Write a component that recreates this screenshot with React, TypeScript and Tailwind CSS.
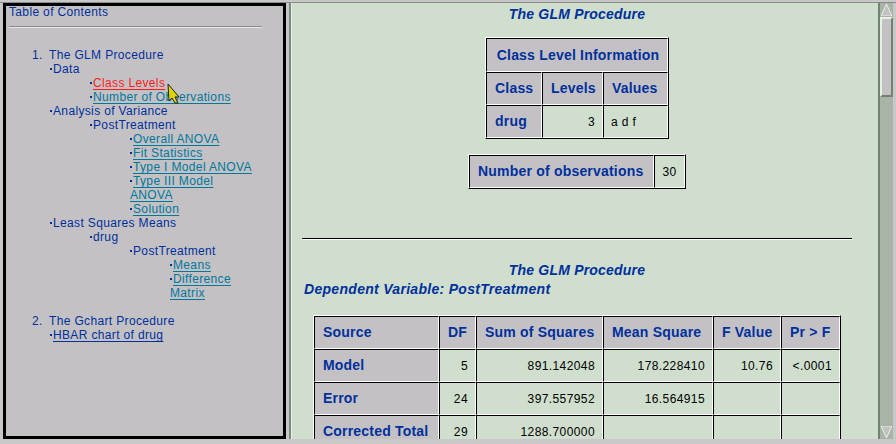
const font = "font-['Liberation_Sans',Arial,sans-serif]"

const Bullet = () => <span className="inline-block w-[2px] h-[2px] bg-[#00309c] align-[3px] mr-[1px]" />

const TocLink = ({ text, color = "text-[#00789c]" }: { text: string; color?: string }) => (
  <a className={`underline underline-offset-[2px] ${color}`}>{text}</a>
)

const TocRow = ({ pad, children }: { pad: string; children: React.ReactNode }) => (
  <div className={pad}>
    <Bullet />
    {children}
  </div>
)

const Head = ({
  children,
  className = "",
  colSpan,
}: {
  children: React.ReactNode
  className?: string
  colSpan?: number
}) => (
  <td
    colSpan={colSpan}
    className={`bg-[#c4c1c4] border-t border-l border-t-black border-l-black border-r border-b border-r-white border-b-white pl-[8px] pr-[6px] text-[14px] font-bold text-[#00309c] tracking-[0.2px] whitespace-nowrap ${className}`}
  >
    {children}
  </td>
)

const Cell = ({ children, className = "text-right" }: { children?: React.ReactNode; className?: string }) => (
  <td
    className={`border-t border-l border-t-black border-l-black border-r border-b border-r-white border-b-white px-[7px] text-[12px] text-black tracking-[0.4px] whitespace-nowrap ${className}`}
  >
    {children}
  </td>
)

const anova = [
  ["Model", "5", "891.142048", "178.228410", "10.76", "<.0001"],
  ["Error", "24", "397.557952", "16.564915", "", ""],
  ["Corrected Total", "29", "1288.700000", "", "", ""],
]

const tableClass =
  "border-separate border-spacing-0 border-t border-l border-t-white border-l-white border-r border-b border-r-black border-b-black"

const titleClass = "text-[14px] italic font-bold text-[#00309c]"

export default function App() {
  return (
    <div className={`${font} relative w-[896px] h-[444px] overflow-hidden bg-[#c8c8c8] flex flex-col`}>
      <div className="h-[3px] shrink-0 border-b border-[#8a8a8a]" />
      <div className="flex h-[436px] pl-[3px] pr-[3px]">
        {/* toc frame */}
        <div className="w-[283px] shrink-0 border-[3px] border-black bg-[#c4c1c4] text-[12px] leading-[14px] tracking-[0.35px] text-[#00309c] px-[3px]">
          <div className="leading-[12px]">Table of Contents</div>
          <div className="mt-[8px] h-[2px] w-[253px] bg-[#e8e8e8] border-t border-[#8a8a8a]" />
          <div className="mt-[20px] pl-[23px] w-[248px]">
            <div>
              <span className="inline-block w-[17px]">1.</span>The GLM Procedure
            </div>
            <TocRow pad="pl-[18px]">Data</TocRow>
            <TocRow pad="pl-[58px]">
              <TocLink text="Class Levels" color="text-[#ff1c1c]" />
            </TocRow>
            <TocRow pad="pl-[58px]">
              <TocLink text="Number of Observations" />
            </TocRow>
            <TocRow pad="pl-[18px]">Analysis of Variance</TocRow>
            <TocRow pad="pl-[58px]">PostTreatment</TocRow>
            <TocRow pad="pl-[98px]">
              <TocLink text="Overall ANOVA" />
            </TocRow>
            <TocRow pad="pl-[98px]">
              <TocLink text="Fit Statistics" />
            </TocRow>
            <TocRow pad="pl-[98px]">
              <TocLink text="Type I Model ANOVA" />
            </TocRow>
            <TocRow pad="pl-[98px]">
              <TocLink text="Type III Model ANOVA" />
            </TocRow>
            <TocRow pad="pl-[98px]">
              <TocLink text="Solution" />
            </TocRow>
            <TocRow pad="pl-[18px]">Least Squares Means</TocRow>
            <TocRow pad="pl-[58px]">drug</TocRow>
            <TocRow pad="pl-[98px]">PostTreatment</TocRow>
            <TocRow pad="pl-[138px]">
              <TocLink text="Means" />
            </TocRow>
            <TocRow pad="pl-[138px]">
              <TocLink text="Difference Matrix" />
            </TocRow>
            <div className="mt-[14px]">
              <span className="inline-block w-[17px]">2.</span>The Gchart Procedure
            </div>
            <TocRow pad="pl-[18px]">
              <TocLink text="HBAR chart of drug" color="text-[#00309c]" />
            </TocRow>
          </div>
        </div>

        {/* splitter */}
        <div className="w-[5px] shrink-0 border-r-2 border-[#7c8c7c]" />

        {/* output frame */}
        <div className="w-[587px] shrink-0 bg-[#cfdecd] overflow-hidden border-l border-[#e8f0e6]">
          <div className="w-[550px] ml-[10px] flex flex-col items-center">
            <div className={`${titleClass} pt-[2px] leading-[18px] tracking-[0.2px]`}>The GLM Procedure</div>
            <table className={`${tableClass} mt-[14px] h-[102px]`}>
              <tbody>
                <tr className="h-[34px]">
                  <Head colSpan={3} className="text-center">
                    Class Level Information
                  </Head>
                </tr>
                <tr className="h-[33px]">
                  <Head className="w-[56px]">Class</Head>
                  <Head className="w-[61px]">Levels</Head>
                  <Head className="w-[65px]">Values</Head>
                </tr>
                <tr className="h-[33px]">
                  <Head>drug</Head>
                  <Cell>3</Cell>
                  <Cell className="text-left">a d f</Cell>
                </tr>
              </tbody>
            </table>
            <table className={`${tableClass} mt-[15px] h-[35px]`}>
              <tbody>
                <tr>
                  <Head className="w-[185px]">Number of observations</Head>
                  <Cell className="text-center w-[31px]">30</Cell>
                </tr>
              </tbody>
            </table>
            <div className="mt-[49px] h-[2px] w-full border-t border-black bg-white" />
            <div className={`${titleClass} mt-[21px] leading-[18px] tracking-[0.2px]`}>The GLM Procedure</div>
            <div className={`${titleClass} self-start ml-[2px] leading-[20px] tracking-[0.3px]`}>
              Dependent Variable: PostTreatment
            </div>
            <table className={`${tableClass} mt-[16px] self-start ml-[11px]`}>
              <tbody>
                <tr className="h-[33px]">
                  <Head className="w-[125px]">Source</Head>
                  <Head className="w-[37px]">DF</Head>
                  <Head className="w-[127px]">Sum of Squares</Head>
                  <Head className="w-[110px]">Mean Square</Head>
                  <Head className="w-[68px]">F Value</Head>
                  <Head className="w-[59px]">Pr &gt; F</Head>
                </tr>
                {anova.map((row) => (
                  <tr key={row[0]} className="h-[33px]">
                    <Head>{row[0]}</Head>
                    {row.slice(1).map((value, i) => (
                      <Cell key={i}>{value}</Cell>
                    ))}
                  </tr>
                ))}
              </tbody>
            </table>
          </div>
        </div>

        {/* scrollbar */}
        <div className="w-[15px] shrink-0 flex flex-col bg-[#a8b5a6] border-l-2 border-[#6f8370]">
          <div className="h-[14px] shrink-0 flex items-center justify-center">
            <svg width="11" height="12" viewBox="0 0 11 12">
              <polygon points="5.5,0 11,12 0,12" fill="#c4c1c4" stroke="#e8f0e6" strokeWidth="1" />
            </svg>
          </div>
          <div className="h-[80px] shrink-0 bg-[#c4c1c4] border-t-2 border-l-2 border-t-[#e8f0e6] border-l-[#e8f0e6] border-r-2 border-b-2 border-r-[#6f8370] border-b-[#6f8370]" />
          <div className="flex-1" />
          <div className="h-[14px] shrink-0 flex items-center justify-center">
            <svg width="11" height="12" viewBox="0 0 11 12">
              <polygon points="0,0 11,0 5.5,12" fill="#c4c1c4" stroke="#e8f0e6" strokeWidth="1" />
            </svg>
          </div>
        </div>
      </div>

      {/* mouse pointer */}
      <svg className="absolute left-[167px] top-[83px]" width="14" height="21" viewBox="0 0 14 21">
        <polygon points="1,1 12,14 8,14 11,20 8,20 5,15 2,18" fill="#dcd400" stroke="#222" strokeWidth="1" />
      </svg>
    </div>
  )
}
